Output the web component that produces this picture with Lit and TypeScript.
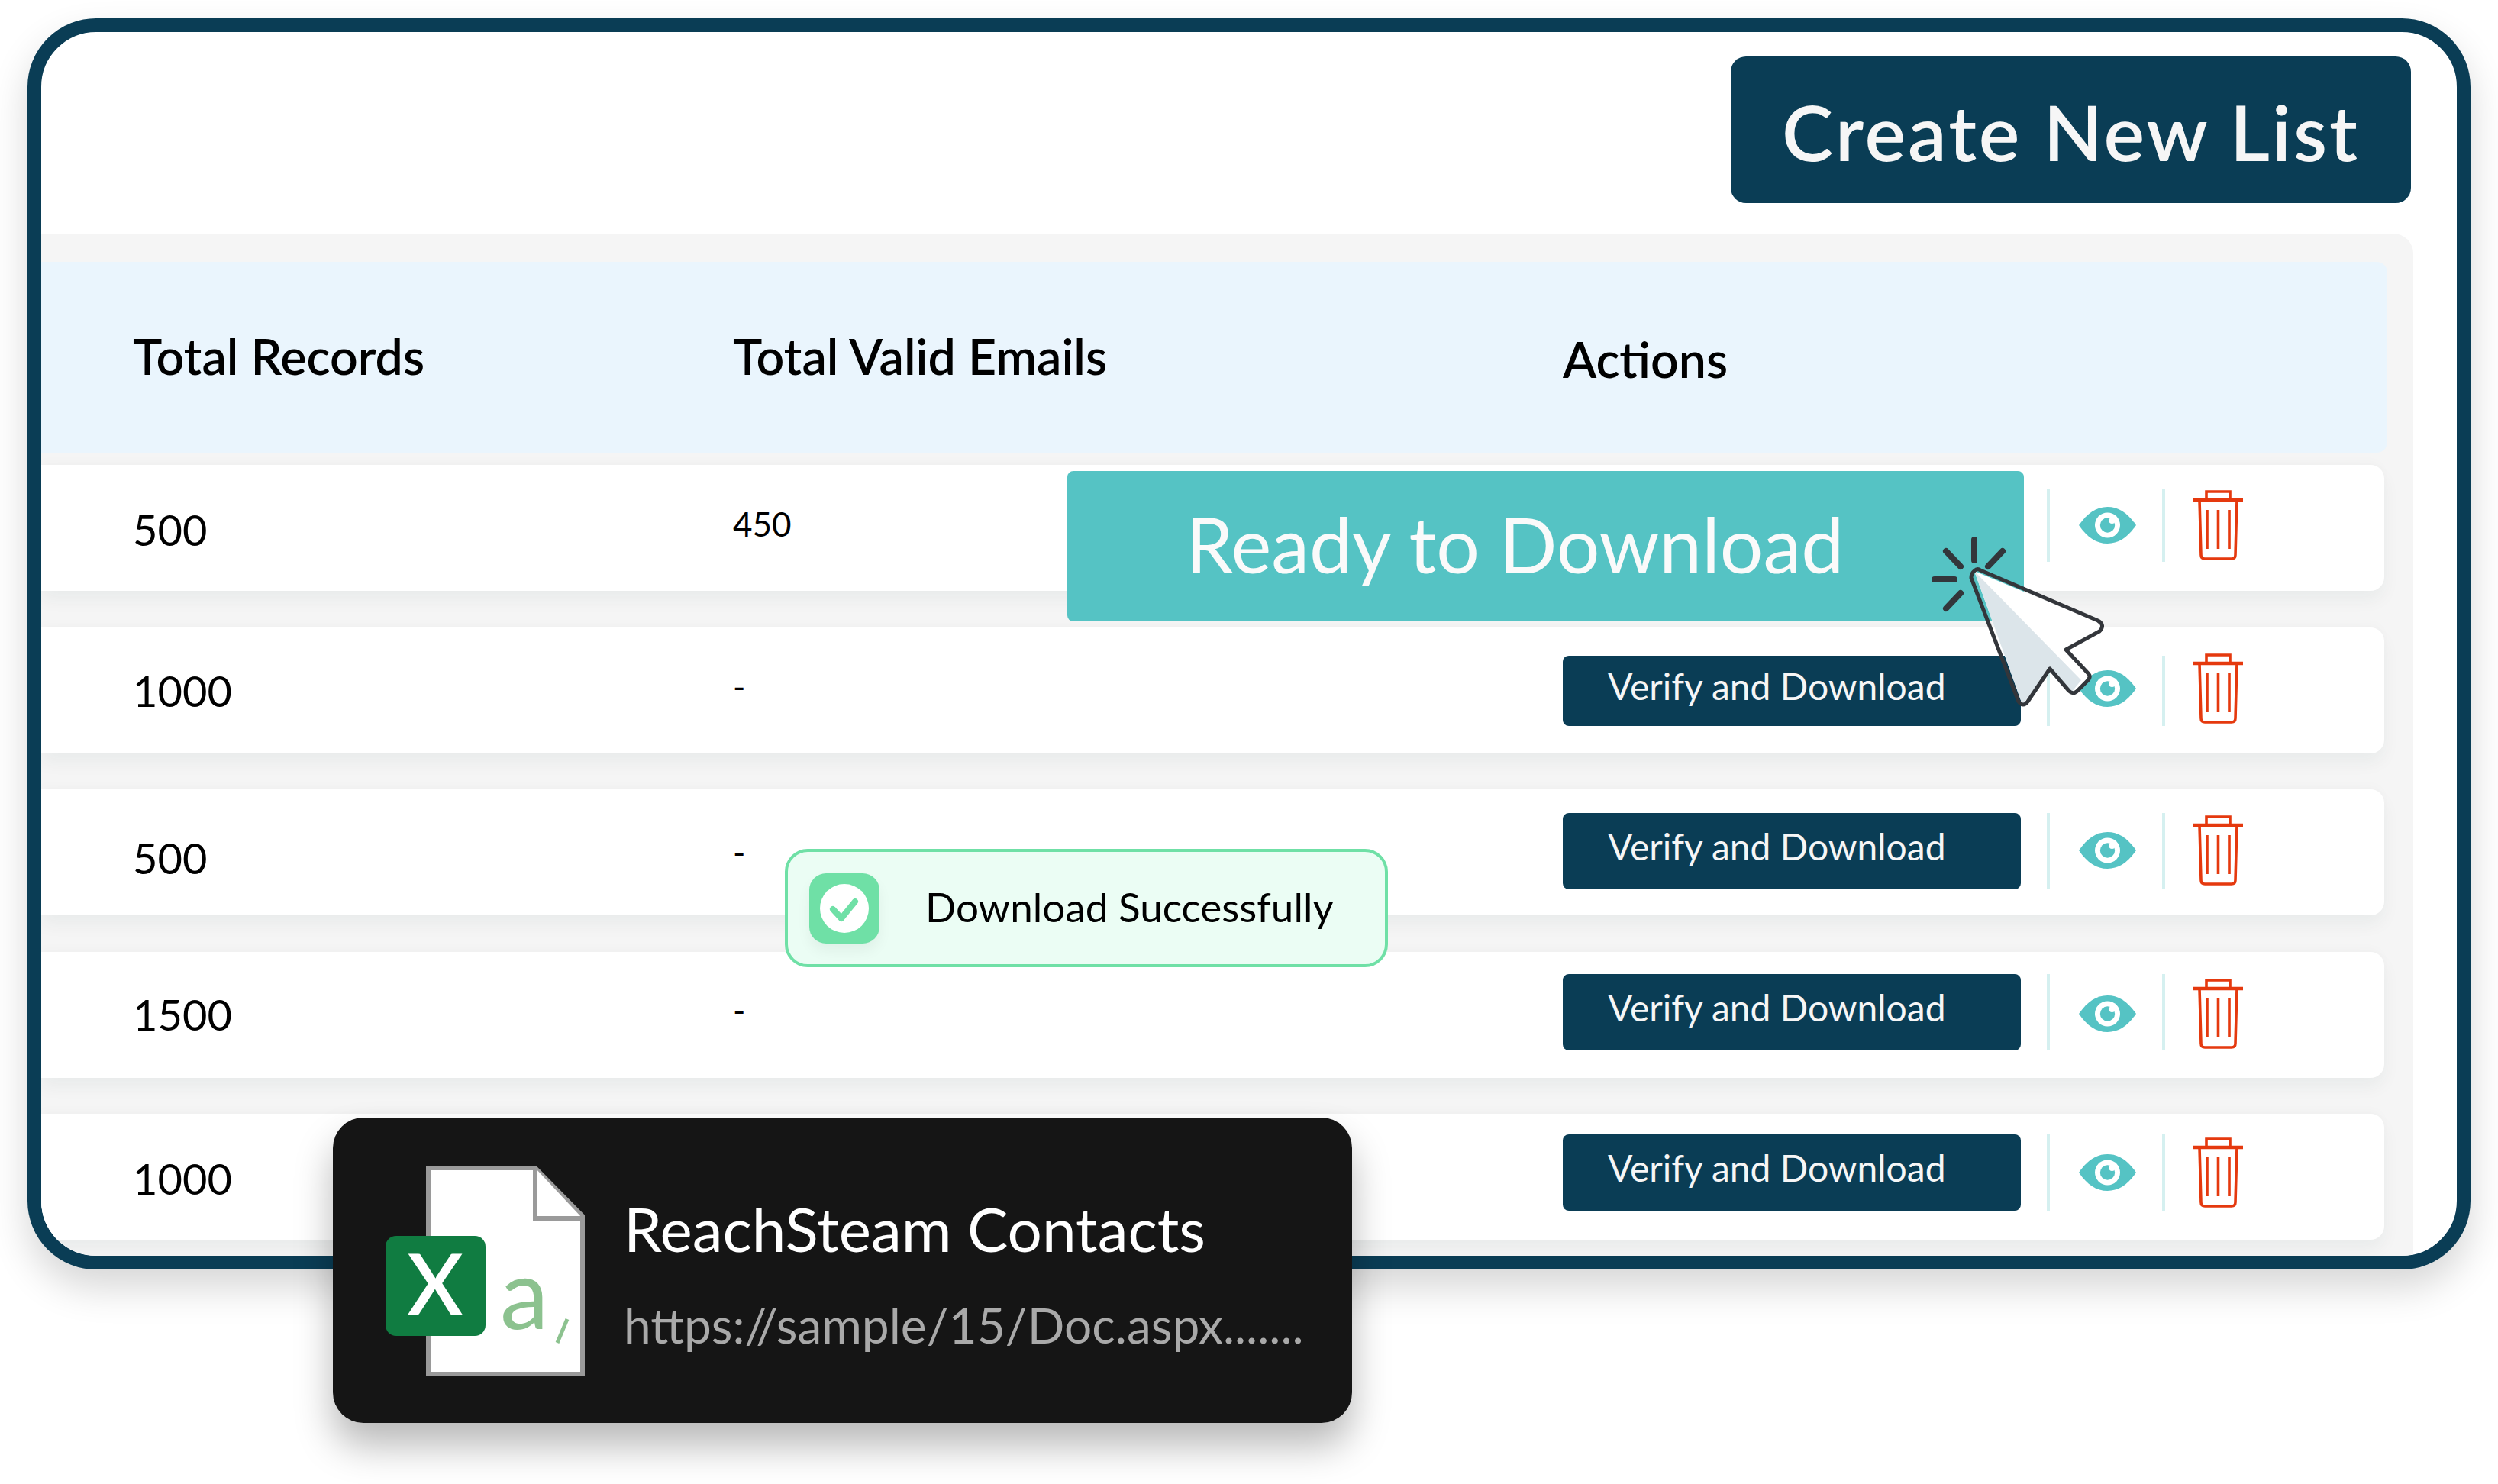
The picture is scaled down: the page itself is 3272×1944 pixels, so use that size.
import {css, html, LitElement, svg} from 'lit'
import {customElement} from 'lit/decorators.js'

interface Row {
    records: string
    valid: string
    // the source table is not quite regular: per-row drift of cells, in px
    recordsShift: number
    validShift: number
    actionShift: number
    iconShift: number
    buttonHeight: number
    ready?: boolean
}

const ROWS: Row[] = [
    {records: '500', valid: '450', recordsShift: 4, validShift: -12, actionShift: -7, iconShift: 0, buttonHeight: 96, ready: true},
    {records: '1000', valid: '-', recordsShift: 0, validShift: -11, actionShift: 2, iconShift: -6, buttonHeight: 92},
    {records: '500', valid: '-', recordsShift: 14, validShift: -2, actionShift: -3, iconShift: -2, buttonHeight: 100},
    {records: '1500', valid: '-', recordsShift: -1, validShift: -13, actionShift: -7, iconShift: 4, buttonHeight: 100},
    {records: '1000', valid: '-', recordsShift: 4, validShift: -13, actionShift: -12, iconShift: 0, buttonHeight: 100},
]

const eyeIcon = svg`
    <svg class="eye" viewBox="0 0 75 48">
        <path fill="#55c3c4" d="M0 24C11 8 23 0 37.500 0S64 8 75 24C64 40 52 48 37.500 48S11 40 0 24Z"/>
        <circle cx="37.500" cy="24" r="16.500" fill="#fff"/>
        <circle cx="37.500" cy="24" r="9.700" fill="#55c3c4"/>
        <circle cx="43.500" cy="18" r="4" fill="#fff"/>
    </svg>`

const trashIcon = svg`
    <svg class="trash" viewBox="0 0 65 92" fill="none" stroke="#e5390e" stroke-width="3.600">
        <path stroke-width="4.400" d="M0 13H65"/>
        <path d="M17 13V2H48V13"/>
        <path d="M8 13L10 85Q10 90 15 90H50Q55 90 55 85L57 13"/>
        <path d="M18 26V77M32.500 26V77M47 26V77"/>
    </svg>`

@customElement('app-root')
export class AppRoot extends LitElement {

    render() {
        return html`
            <div class="frame">
                <div class="toolbar">
                    <button class="create">Create New List</button>
                </div>
                <div class="panel">
                    <div class="head">
                        <span>Total Records</span>
                        <span>Total Valid Emails</span>
                        <span class="head-actions">Actions</span>
                    </div>
                    <div class="rows">
                        ${ROWS.map((row) => this._renderRow(row))}
                    </div>
                </div>
            </div>

            <div class="banner">Ready to Download</div>

            <div class="toast">
                <span class="toast-icon">
                    <svg viewBox="0 0 92 92">
                        <circle cx="46" cy="46" r="32" fill="#fff"/>
                        <path d="M31 47L42 59L60 37" fill="none" stroke="#6fe0a6" stroke-width="8"
                              stroke-linecap="round" stroke-linejoin="round"/>
                    </svg>
                </span>
                <span class="toast-text">Download Successfully</span>
            </div>

            <div class="file-card">
                <svg class="file-icon" viewBox="0 0 262 276">
                    <path d="M56 3H196L258 66V273H56Z" fill="#fff" stroke="#9a9a9a" stroke-width="6"/>
                    <path d="M196 3V69H258" fill="#fff" stroke="#9a9a9a" stroke-width="6"/>
                    <text class="file-a" x="150" y="214">a</text>
                    <path d="M238 201L225 232" stroke="#8cc28f" stroke-width="5" fill="none"/>
                    <rect x="0" y="92" width="131" height="131" rx="14" fill="#107c41"/>
                    <text class="file-x" x="65" y="196" text-anchor="middle">X</text>
                </svg>
                <div class="file-text">
                    <div class="file-name">ReachSteam Contacts</div>
                    <div class="file-url">https://sample/15/Doc.aspx.......</div>
                </div>
            </div>

            <svg class="cursor" viewBox="0 0 240 230" fill="none">
                <path fill="#fff" d="M64 67L232 137L184 170L214 202L192 225L163 195L127 242Z"/>
                <path fill="#dce5ea" d="M64 67L204 210L192 225L163 195L127 242Z"/>
                <path stroke="#33363b" stroke-width="5" stroke-linejoin="round"
                      d="M64 67Q68 63 72 66L226 132Q236 138 228 146L184 170L214 202Q217 206 212 211L198 225Q193 229 188 224L163 195L134 238Q128 246 122 238L60 76Q60 70 64 67Z"/>
                <path stroke="#33363b" stroke-width="8" stroke-linecap="round"
                      d="M64 26V53M101 41L82 61M27 41L46 61M12 78H38M46 96L27 116"/>
            </svg>
        `
    }

    private _renderRow(row: Row) {
        const sep = html`<span class="sep" style="height:${row.buttonHeight}px"></span>`
        return html`
            <div class="row">
                <span class="records" style="margin-top:${row.recordsShift}px">${row.records}</span>
                <span class="valid" style="margin-top:${row.validShift}px">${row.valid}</span>
                <div class="actions" style="margin-top:${row.actionShift}px">
                    ${row.ready ? html`<span class="verify-space"></span>`
                            : html`<button class="verify" style="height:${row.buttonHeight}px">Verify and Download</button>`}
                    ${sep}
                    <span class="icon-cell" style="margin-top:${row.iconShift}px">${eyeIcon}</span>
                    ${sep}
                    <span class="icon-cell trash-cell" style="margin-top:${row.iconShift}px">${trashIcon}</span>
                </div>
            </div>
        `
    }

    static styles = css`
      :host {
        display: block;
        position: relative;
        width: 3272px;
        height: 1944px;
        background: #fff;
        font-family: 'Lato', sans-serif;
        color: #000;
        overflow: hidden;
      }

      button {
        font-family: inherit;
        border: 0;
        color: #f6f6f6;
        background: #0a3d55;
      }

      .frame {
        box-sizing: border-box;
        width: 3200px;
        height: 1639px;
        margin: 24px 0 0 36px;
        border: 18px solid #0a3d55;
        border-radius: 90px;
        background: #fff;
        overflow: hidden;
        padding-top: 32px;
        box-shadow: 0 24px 50px rgba(0, 0, 0, 0.16);
      }

      .toolbar {
        display: flex;
        justify-content: flex-end;
        padding-right: 60px;
      }

      .create {
        width: 891px;
        height: 192px;
        padding: 4px 0 0;
        border-radius: 20px;
        font-size: 101px;
        font-weight: 600;
        letter-spacing: 3px;
      }

      .panel {
        margin: 40px 57px 0 0;
        padding: 37px 34px 0 0;
        height: 1339px;
        box-sizing: border-box;
        background: #f5f5f5;
        border-top-right-radius: 26px;
      }

      .head {
        display: grid;
        grid-template-columns: 786px 1087px 1fr;
        align-items: center;
        box-sizing: border-box;
        height: 250px;
        padding: 0 0 4px 120px;
        background: #eaf5fd;
        border-radius: 0 14px 14px 0;
        font-size: 64.500px;
        font-weight: 600;
      }

      .head-actions {
        margin-top: 8px;
      }

      .rows {
        display: flex;
        flex-direction: column;
        gap: 47.500px;
        margin-top: 16px;
        padding-right: 4px;
      }

      .row {
        display: grid;
        grid-template-columns: 786px 1087px 1fr;
        align-items: center;
        height: 165px;
        padding-left: 120px;
        background: #fff;
        border-radius: 0 18px 18px 0;
        box-shadow: 0 12px 22px rgba(20, 50, 50, 0.05), 0 -6px 12px rgba(20, 50, 50, 0.015);
      }

      .records {
        font-size: 56px;
      }

      .valid {
        font-size: 44px;
      }

      .actions {
        display: flex;
        align-items: center;
      }

      .verify-space,
      .verify {
        flex: none;
        width: 600px;
      }

      .verify {
        padding: 0 0 13px 59px;
        border-radius: 8px;
        font-size: 48px;
        text-align: left;
      }

      .sep {
        flex: none;
        width: 4px;
        margin-left: 34px;
        background: #d5f0f0;
      }

      .icon-cell {
        display: flex;
        align-items: center;
        margin-left: 38px;
      }

      .eye {
        display: block;
        width: 75px;
        height: 48px;
      }

      .trash-cell {
        margin-left: 37px;
      }

      .trash {
        display: block;
        width: 65px;
        height: 92px;
      }

      .banner {
        position: absolute;
        left: 1398px;
        top: 617px;
        width: 1253px;
        height: 197px;
        box-sizing: border-box;
        padding: 0 0 8px 155px;
        display: flex;
        align-items: center;
        background: #55c3c4;
        border-radius: 8px;
        color: #fafafa;
        font-size: 100px;
      }

      .toast {
        position: absolute;
        left: 1028px;
        top: 1112px;
        width: 790px;
        height: 155px;
        box-sizing: border-box;
        display: flex;
        align-items: center;
        gap: 60px;
        padding-left: 28px;
        background: #ebfdf4;
        border: 4px solid #6fe0a6;
        border-radius: 30px;
        font-size: 53px;
      }

      .toast-text {
        margin-bottom: 4px;
      }

      .toast-icon {
        flex: none;
        width: 92px;
        height: 92px;
        border-radius: 22px;
        background: #6fe0a6;
        box-shadow: 0 10px 18px rgba(0, 0, 0, 0.05);
      }

      .toast-icon svg {
        display: block;
      }

      .file-card {
        position: absolute;
        left: 436px;
        top: 1464px;
        width: 1335px;
        height: 400px;
        box-sizing: border-box;
        display: flex;
        align-items: center;
        padding-left: 69px;
        gap: 50px;
        background: #151515;
        border-radius: 40px;
        box-shadow: 0 30px 50px rgba(0, 0, 0, 0.28);
      }

      .file-icon {
        flex: none;
        width: 262px;
        height: 276px;
        margin-top: 2px;
      }

      .file-a {
        font-size: 128px;
        fill: #8cc28f;
      }

      .file-x {
        font-size: 112px;
        font-weight: 600;
        fill: #fff;
      }

      .file-text {
        margin-top: 6px;
      }

      .file-name {
        font-size: 80px;
        color: #fff;
      }

      .file-url {
        margin-top: 40px;
        font-size: 64px;
        color: #a9a9a9;
      }

      .cursor {
        position: absolute;
        left: 2522px;
        top: 681px;
        width: 240px;
        height: 230px;
        overflow: visible;
      }
    `
}

declare global {
    interface HTMLElementTagNameMap {
        'app-root': AppRoot
    }
}
